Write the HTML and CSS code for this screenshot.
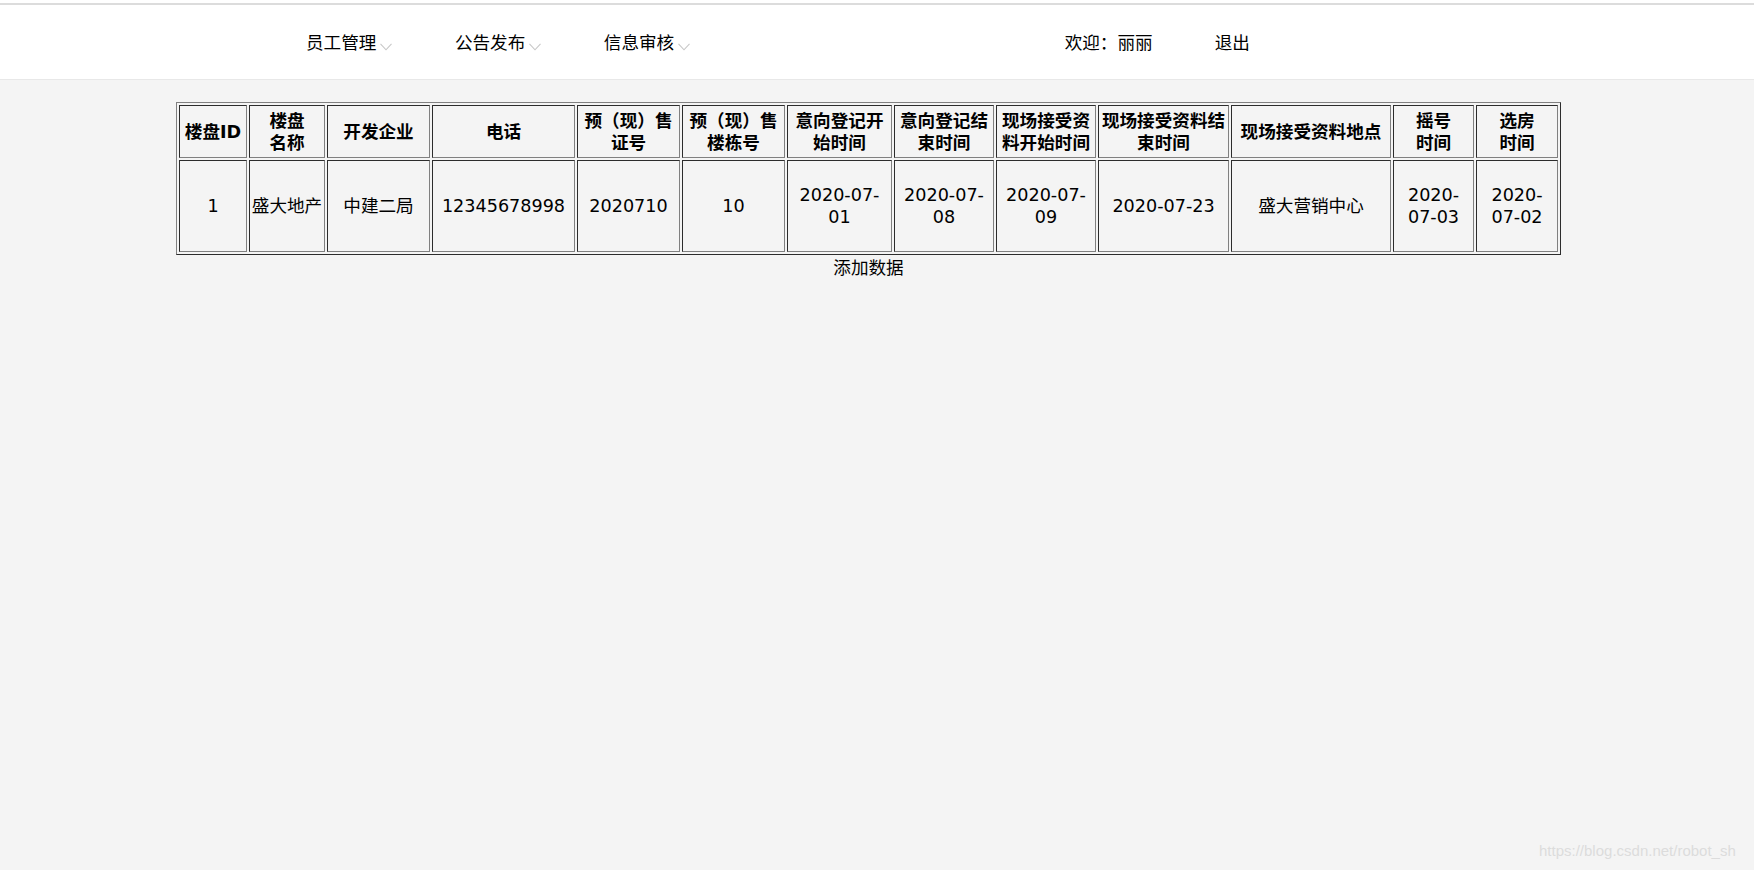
FILE: index.html
```html
<!DOCTYPE html>
<html lang="zh-CN">
<head>
<meta charset="utf-8">
<title>楼盘信息</title>
<link rel="stylesheet" href="styles.css">
</head>
<body>
<header class="header">
  <div class="top-line"></div>
  <nav class="nav">
    <ul class="menu">
      <li class="menu-item">员工管理<span class="chevron"><svg width="12" height="8" viewBox="0 0 12 8"><path d="M0.5 0.8 L6 6.8 L11.5 0.8" fill="none" stroke="#c8c8c8" stroke-width="1.1"/></svg></span></li>
      <li class="menu-item">公告发布<span class="chevron"><svg width="12" height="8" viewBox="0 0 12 8"><path d="M0.5 0.8 L6 6.8 L11.5 0.8" fill="none" stroke="#c8c8c8" stroke-width="1.1"/></svg></span></li>
      <li class="menu-item">信息审核<span class="chevron"><svg width="12" height="8" viewBox="0 0 12 8"><path d="M0.5 0.8 L6 6.8 L11.5 0.8" fill="none" stroke="#c8c8c8" stroke-width="1.1"/></svg></span></li>
    </ul>
    <div class="user">
      <span class="welcome">欢迎：丽丽</span>
      <a class="logout" href="#">退出</a>
    </div>
  </nav>
</header>
<main class="content">
  <table class="data-table">
    <colgroup>
      <col class="c1"><col class="c2"><col class="c3"><col class="c4"><col class="c5"><col class="c6"><col class="c7"><col class="c8"><col class="c9"><col class="c10"><col class="c11"><col class="c12"><col class="c13">
    </colgroup>
    <tr class="head-row">
      <th>楼盘ID</th>
      <th>楼盘<br>名称</th>
      <th>开发企业</th>
      <th>电话</th>
      <th>预（现）售<br>证号</th>
      <th>预（现）售<br>楼栋号</th>
      <th>意向登记开<br>始时间</th>
      <th>意向登记结<br>束时间</th>
      <th>现场接受资<br>料开始时间</th>
      <th>现场接受资料结<br>束时间</th>
      <th>现场接受资料地点</th>
      <th>摇号<br>时间</th>
      <th>选房<br>时间</th>
    </tr>
    <tr class="body-row">
      <td>1</td>
      <td>盛大地产</td>
      <td>中建二局</td>
      <td>12345678998</td>
      <td>2020710</td>
      <td>10</td>
      <td>2020-07-01</td>
      <td>2020-07-08</td>
      <td>2020-07-09</td>
      <td>2020-07-23</td>
      <td>盛大营销中心</td>
      <td>2020-07-03</td>
      <td>2020-07-02</td>
    </tr>
  </table>
  <div class="add"><a href="#">添加数据</a></div>
</main>
<div class="watermark">https://blog.csdn.net/robot_sh</div>
</body>
</html>
```

FILE: styles.css
```css
html, body {
  margin: 0;
  padding: 0;
}

body {
  background: #f4f4f4;
  color: #000;
  font-family: "DejaVu Sans", "Noto Sans CJK SC", sans-serif;
  font-size: 17.6px;
  min-height: 870px;
}

.header {
  background: #fff;
  padding-top: 3px;
}

.top-line {
  height: 2px;
  background: #dcdcdc;
}

.nav {
  height: 74px;
  border-bottom: 1px solid #e8e8e8;
  display: flex;
  align-items: center;
  padding-left: 306px;
}

.menu {
  list-style: none;
  margin: 0;
  padding: 0;
  display: flex;
  gap: 63px;
}

.menu-item {
  display: flex;
  align-items: center;
  font-family: "Noto Sans CJK SC", sans-serif;
  line-height: 24px;
}

.chevron {
  display: inline-flex;
  margin-left: 3.5px;
  margin-top: 10px;
}

.user {
  margin-left: 375px;
  display: flex;
  align-items: center;
  font-family: "Noto Sans CJK SC", sans-serif;
  line-height: 24px;
}

.welcome {
  width: 150px;
}

.logout {
  color: #000;
  text-decoration: none;
}

.content {
  width: 1385px;
  margin-left: 176px;
  padding-top: 22px;
}

.data-table {
  width: 1385px;
  table-layout: fixed;
  border-collapse: separate;
  border-spacing: 2px;
  border: 1px outset #808080;
}

.c1 { width: 68px; }
.c2 { width: 76px; }
.c3 { width: 103px; }
.c4 { width: 143px; }
.c5 { width: 103px; }
.c6 { width: 103px; }
.c7 { width: 105px; }
.c8 { width: 100px; }
.c9 { width: 100px; }
.c10 { width: 131px; }
.c11 { width: 160px; }
.c12 { width: 81px; }
.c13 { width: 82px; }

.data-table th,
.data-table td {
  border: 1px inset #808080;
  padding: 1px;
  text-align: center;
  vertical-align: middle;
  line-height: 22px;
}

.data-table th {
  font-weight: bold;
}

.head-row {
  height: 53px;
}

.body-row {
  height: 92px;
}

.add {
  text-align: center;
  line-height: 24px;
  font-family: "Noto Sans CJK SC", sans-serif;
}

.add a {
  color: #000;
  text-decoration: none;
}

.watermark {
  position: absolute;
  left: 1539px;
  top: 842px;
  font-family: "Liberation Sans", sans-serif;
  font-size: 15px;
  color: #dcdcdc;
  white-space: nowrap;
}
```
